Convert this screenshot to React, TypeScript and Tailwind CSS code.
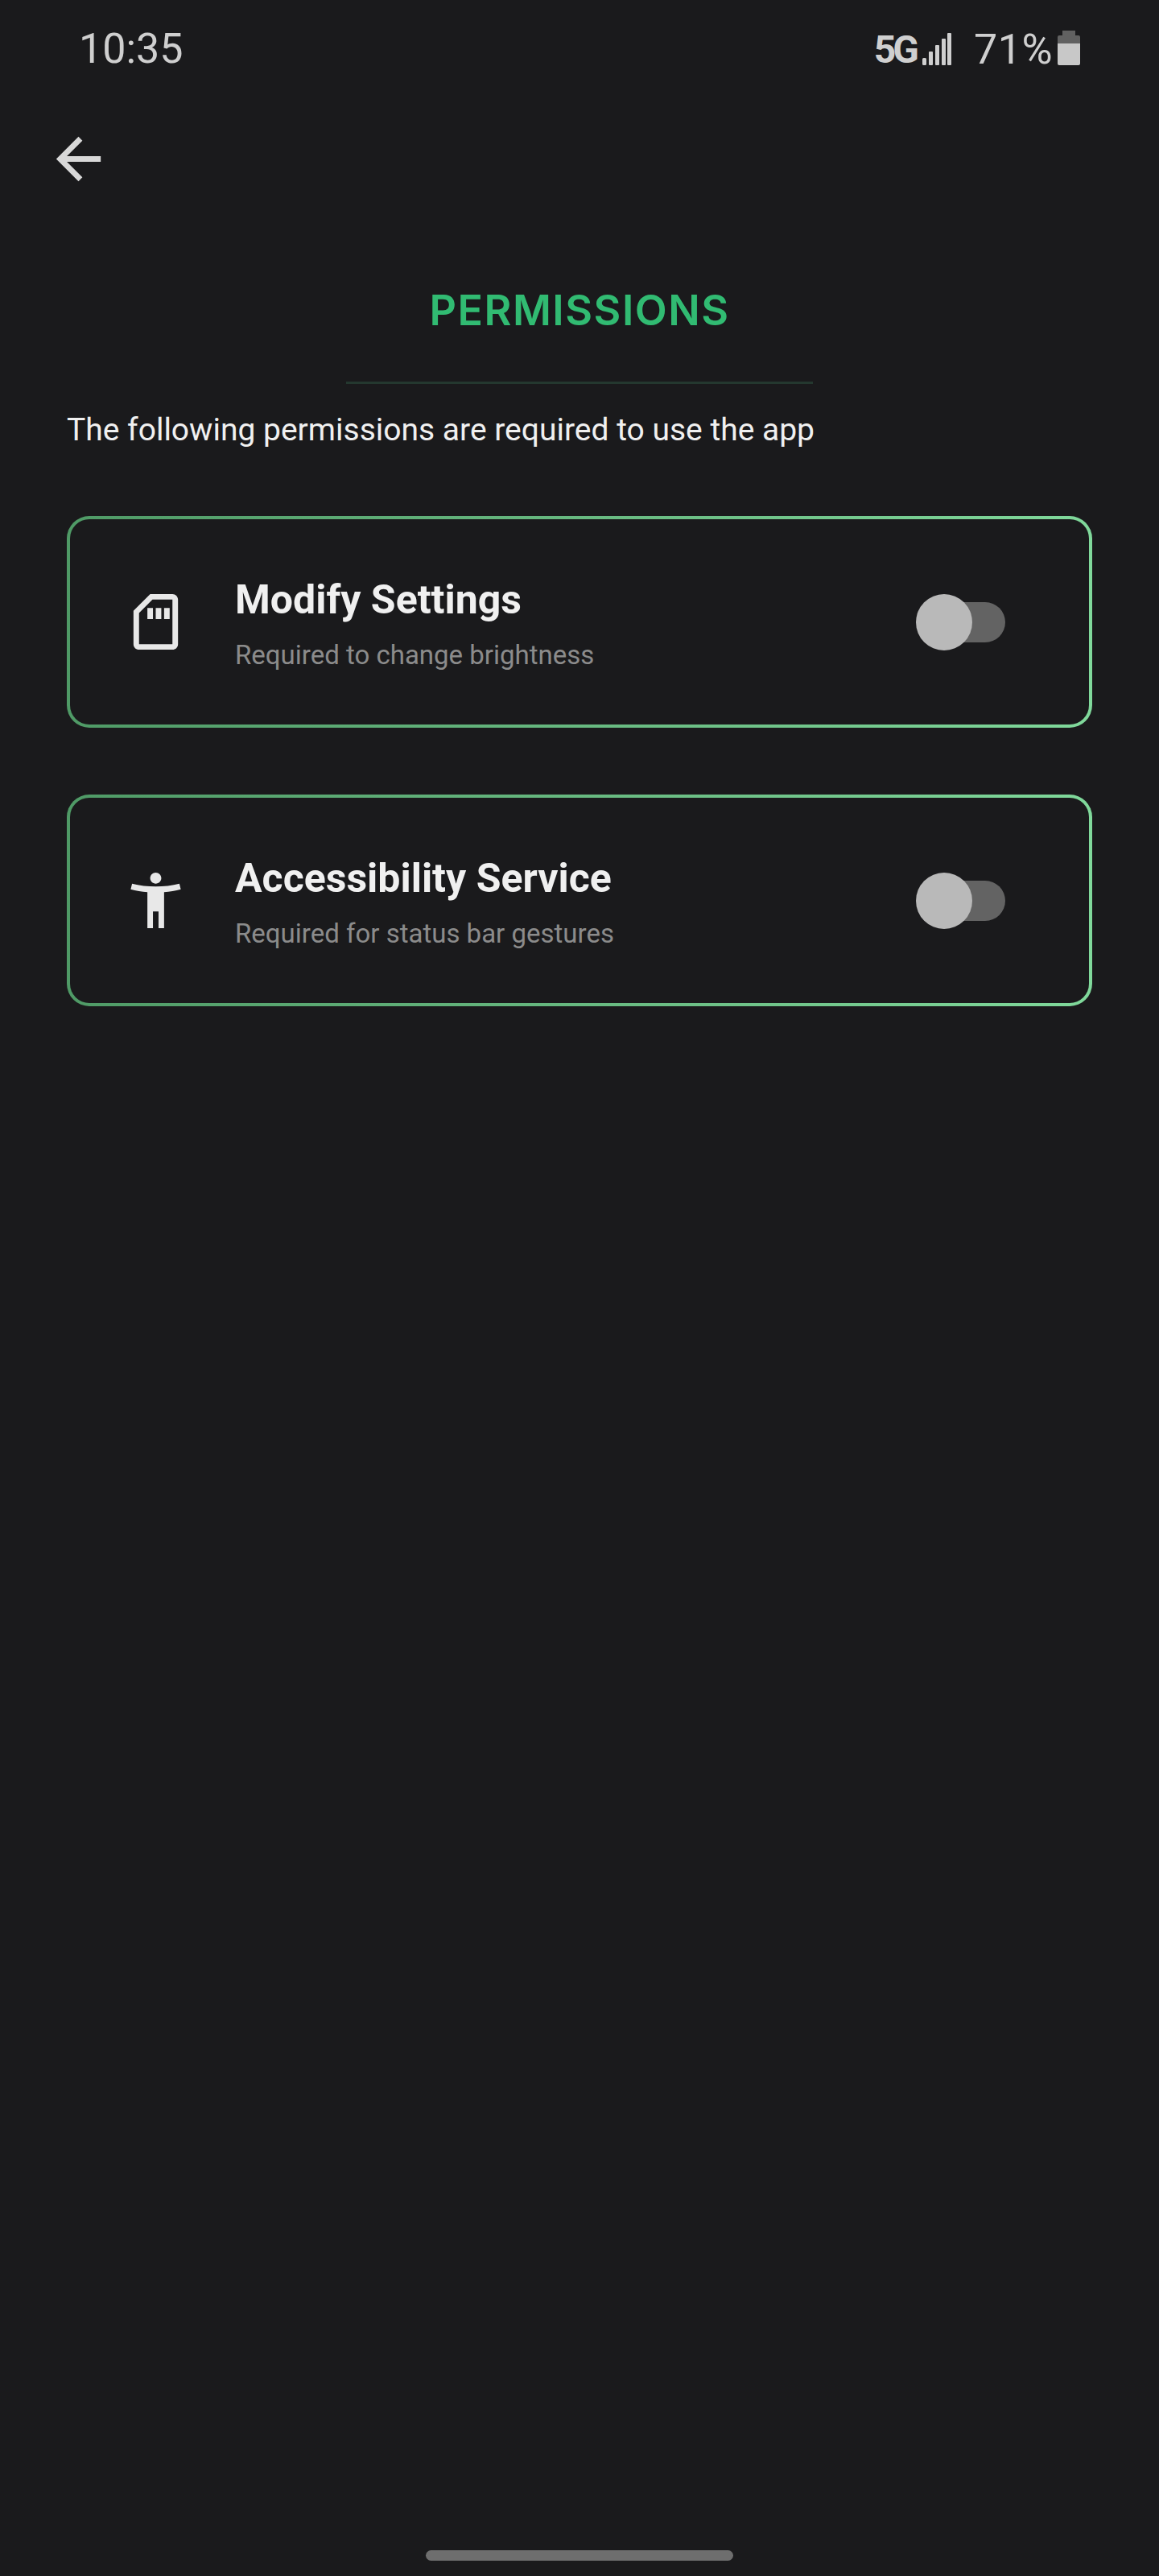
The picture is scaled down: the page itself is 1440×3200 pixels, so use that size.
const robotoFont = { fontFamily: "Roboto, sans-serif" };

const SignalBars = () => (
  <svg width="36" height="40" viewBox="0 0 36 40" className="text-[#cfcfcf]" fill="currentColor">
    <rect x="0" y="31" width="5" height="9" rx="1.5" />
    <rect x="8" y="23" width="5" height="17" rx="1" />
    <rect x="16" y="15" width="5" height="25" rx="1" />
    <rect x="24" y="7" width="5" height="33" rx="1" />
    <rect x="31" y="0" width="5" height="40" rx="1" />
  </svg>
);

const Battery = () => (
  <svg width="28" height="43" viewBox="0 0 28 43">
    <path d="M6 0h16v6h4a2 2 0 0 1 2 2v8H0V8a2 2 0 0 1 2-2h4z" fill="#616161" />
    <path d="M0 16h28v25a2 2 0 0 1-2 2H2a2 2 0 0 1-2-2z" fill="#c8c8c8" />
  </svg>
);

const SdCardIcon = () => (
  <svg width="83" height="83" viewBox="0 0 24 24" fill="#e8e8e8">
    <path d="M18 4v16H6V8.83L10.83 4H18m0-2h-7.99L4 8v12c0 1.1.9 2 2 2h12c1.1 0 2-.9 2-2V4c0-1.1-.9-2-2-2zM9 7h2v4H9zm3 0h2v4h-2zm3 0h2v4h-2z" />
  </svg>
);

const AccessibilityIcon = () => (
  <svg width="83" height="83" viewBox="0 0 24 24" fill="#e8e8e8">
    <path d="M20.5 6c-2.61.7-5.67 1-8.5 1s-5.89-.3-8.5-1L3 8c1.86.5 4 .83 6 1v13h2v-6h2v6h2V9c2-.17 4.14-.5 6-1l-.5-2zM12 6c1.1 0 2-.9 2-2s-.9-2-2-2-2 .9-2 2 .9 2 2 2z" />
  </svg>
);

const Toggle = () => (
  <div className="relative w-[111px] h-[70px] flex items-center justify-end">
    <div className="w-[90px] h-[50px] rounded-full bg-[#636363]" />
    <div className="absolute left-0 top-0 w-[70px] h-[70px] rounded-full bg-[#b9b9b9]" />
  </div>
);

interface PermissionCardProps {
  icon: React.ReactNode;
  title: string;
  description: string;
}

const PermissionCard = ({ icon, title, description }: PermissionCardProps) => (
  <div className="rounded-[28px] p-[4px] bg-gradient-to-r from-[#4f9a66] to-[#80d99b]">
    <div className="h-[255px] rounded-[24px] bg-[#1a1a1c] flex items-center pl-[65px] pr-[104px]">
      <div className="w-[83px] shrink-0">{icon}</div>
      <div className="ml-[57px] flex-1 pt-[4px]">
        <h2 className="text-[50px] leading-[58px] font-bold text-[#f0f0f0]">{title}</h2>
        <p className="mt-[20px] text-[33px] leading-[40px] text-[#8b8b8b]">{description}</p>
      </div>
      <Toggle />
    </div>
  </div>
);

export default function App() {
  return (
    <div className="w-[1440px] h-[3200px] bg-[#1a1a1c] flex flex-col" style={robotoFont}>
      <div className="flex items-center justify-between pt-[32px] pl-[98px] pr-[98px] h-[90px] text-[#cfcfcf]">
        <span className="text-[52px] leading-[60px]">10:35</span>
        <div className="flex items-end h-[58px] pb-[9px]">
          <span className="text-[48px] leading-[38px] font-bold tracking-[-4px]">5G</span>
          <div className="ml-[8px]">
            <SignalBars />
          </div>
          <span className="ml-[28px] text-[52px] leading-[38px] tracking-[0.5px]">71%</span>
          <div className="ml-[6px]">
            <Battery />
          </div>
        </div>
      </div>

      <button className="ml-[56px] mt-[66px] w-[83px] h-[83px]">
        <svg width="83" height="83" viewBox="0 0 24 24" fill="#d8d8d8">
          <path d="M20 11H7.83l5.59-5.59L12 4l-8 8 8 8 1.41-1.41L7.83 13H20v-2z" />
        </svg>
      </button>

      <h1
        className="mt-[117px] text-center text-[52px] leading-[60px] font-semibold text-[#31bb72] tracking-[1.5px]"
        style={{ fontFamily: "Inter, sans-serif" }}
      >
        PERMISSIONS
      </h1>
      <div className="mt-[58px] mx-auto w-[580px] h-[3px] bg-[#24382f]" />
      <p className="mt-[33px] ml-[83px] text-[39px] leading-[48px] text-[#f0f0f0]">
        The following permissions are required to use the app
      </p>

      <div className="mt-[83px] px-[83px] flex flex-col gap-[83px]">
        <PermissionCard
          icon={<SdCardIcon />}
          title="Modify Settings"
          description="Required to change brightness"
        />
        <PermissionCard
          icon={<AccessibilityIcon />}
          title="Accessibility Service"
          description="Required for status bar gestures"
        />
      </div>

      <div className="mt-auto mb-[19px] mx-auto w-[382px] h-[13px] rounded-full bg-[#6e6e6e]" />
    </div>
  );
}
